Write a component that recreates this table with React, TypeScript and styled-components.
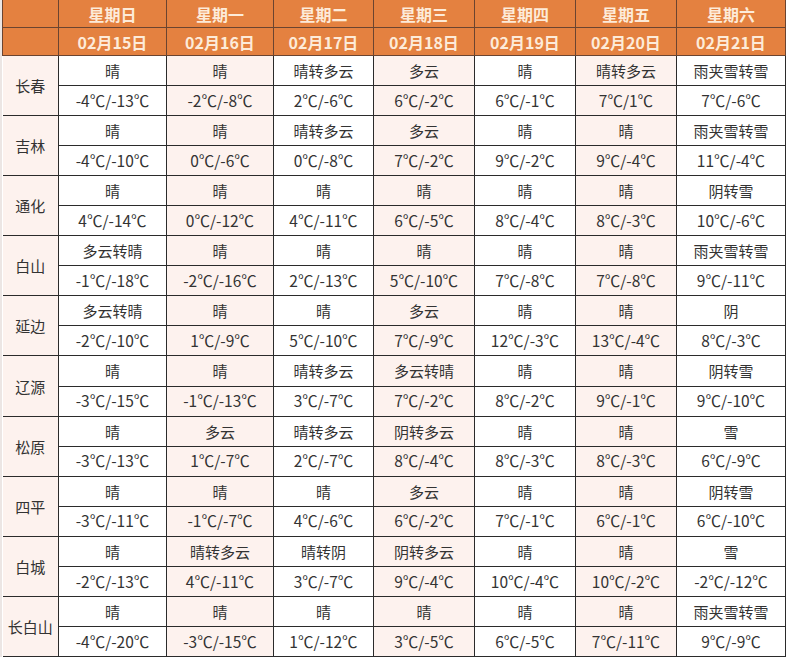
import React from "react";
import styled, { createGlobalStyle } from "styled-components";

const days = ["星期日", "星期一", "星期二", "星期三", "星期四", "星期五", "星期六"];
const dates = ["02月15日", "02月16日", "02月17日", "02月18日", "02月19日", "02月20日", "02月21日"];
const colWidths = [56, 108, 107, 100, 101, 101, 101, 109];

const cities = [
  {
    name: "长春",
    weather: ["晴", "晴", "晴转多云", "多云", "晴", "晴转多云", "雨夹雪转雪"],
    temp: ["-4℃/-13℃", "-2℃/-8℃", "2℃/-6℃", "6℃/-2℃", "6℃/-1℃", "7℃/1℃", "7℃/-6℃"],
  },
  {
    name: "吉林",
    weather: ["晴", "晴", "晴转多云", "多云", "晴", "晴", "雨夹雪转雪"],
    temp: ["-4℃/-10℃", "0℃/-6℃", "0℃/-8℃", "7℃/-2℃", "9℃/-2℃", "9℃/-4℃", "11℃/-4℃"],
  },
  {
    name: "通化",
    weather: ["晴", "晴", "晴", "晴", "晴", "晴", "阴转雪"],
    temp: ["4℃/-14℃", "0℃/-12℃", "4℃/-11℃", "6℃/-5℃", "8℃/-4℃", "8℃/-3℃", "10℃/-6℃"],
  },
  {
    name: "白山",
    weather: ["多云转晴", "晴", "晴", "晴", "晴", "晴", "雨夹雪转雪"],
    temp: ["-1℃/-18℃", "-2℃/-16℃", "2℃/-13℃", "5℃/-10℃", "7℃/-8℃", "7℃/-8℃", "9℃/-11℃"],
  },
  {
    name: "延边",
    weather: ["多云转晴", "晴", "晴", "多云", "晴", "晴", "阴"],
    temp: ["-2℃/-10℃", "1℃/-9℃", "5℃/-10℃", "7℃/-9℃", "12℃/-3℃", "13℃/-4℃", "8℃/-3℃"],
  },
  {
    name: "辽源",
    weather: ["晴", "晴", "晴转多云", "多云转晴", "晴", "晴", "阴转雪"],
    temp: ["-3℃/-15℃", "-1℃/-13℃", "3℃/-7℃", "7℃/-2℃", "8℃/-2℃", "9℃/-1℃", "9℃/-10℃"],
  },
  {
    name: "松原",
    weather: ["晴", "多云", "晴转多云", "阴转多云", "晴", "晴", "雪"],
    temp: ["-3℃/-13℃", "1℃/-7℃", "2℃/-7℃", "8℃/-4℃", "8℃/-3℃", "8℃/-3℃", "6℃/-9℃"],
  },
  {
    name: "四平",
    weather: ["晴", "晴", "晴", "多云", "晴", "晴", "阴转雪"],
    temp: ["-3℃/-11℃", "-1℃/-7℃", "4℃/-6℃", "6℃/-2℃", "7℃/-1℃", "6℃/-1℃", "6℃/-10℃"],
  },
  {
    name: "白城",
    weather: ["晴", "晴转多云", "晴转阴", "阴转多云", "晴", "晴", "雪"],
    temp: ["-2℃/-13℃", "4℃/-11℃", "3℃/-7℃", "9℃/-4℃", "10℃/-4℃", "10℃/-2℃", "-2℃/-12℃"],
  },
  {
    name: "长白山",
    weather: ["晴", "晴", "晴", "晴", "晴", "晴", "雨夹雪转雪"],
    temp: ["-4℃/-20℃", "-3℃/-15℃", "1℃/-12℃", "3℃/-5℃", "6℃/-5℃", "7℃/-11℃", "9℃/-9℃"],
  },
];

const GlobalStyle = createGlobalStyle`
  html, body {
    margin: 0;
    padding: 0;
    background: #ffffff;
  }
  body {
    font-family: "Noto Sans CJK SC", "Noto Sans", sans-serif;
    color: #333333;
  }
`;

const Page = styled.div`
  display: flex;
  width: 786px;
  height: 660px;
  background: #ffffff;
`;

const EdgeStrip = styled.div`
  width: 2px;
  height: 657px;
  background: #ece6e4;
`;

const Table = styled.table`
  border-collapse: collapse;
  table-layout: fixed;
  width: 783px;
  height: 657px;
`;

const HeadCell = styled.th`
  height: 27px;
  padding: 0;
  background: #e48140;
  color: #fdebd9;
  font-size: 16px;
  font-weight: 700;
  text-align: center;
  border: 1px solid #6b4430;
  border-top: none;
  line-height: 1;
`;

const CityCell = styled.td`
  padding: 0;
  background: #fdf2ee;
  font-size: 15px;
  text-align: center;
  border: 1px solid #2b2b2b;
  border-left: none;
  color: #333333;
`;

const DataCell = styled.td<{ $tint: boolean }>`
  height: 29px;
  padding: 0;
  background: ${(p) => (p.$tint ? "#fdf2ee" : "#ffffff")};
  font-size: 15px;
  text-align: center;
  border: 1px solid #2b2b2b;
  color: #333333;
  white-space: nowrap;
  line-height: 1;
`;

const TempText = styled.span`
  font-size: 15.5px;
  font-weight: 400;
`;

export default function App() {
  return (
    <Page>
      <GlobalStyle />
      <EdgeStrip />
      <Table>
        <colgroup>
          {colWidths.map((w, i) => (
            <col key={i} style={{ width: w }} />
          ))}
        </colgroup>
        <thead>
          <tr>
            <HeadCell />
            {days.map((d) => (
              <HeadCell key={d}>{d}</HeadCell>
            ))}
          </tr>
          <tr>
            <HeadCell />
            {dates.map((d) => (
              <HeadCell key={d}>{d}</HeadCell>
            ))}
          </tr>
        </thead>
        <tbody>
          {cities.map((city) => (
            <React.Fragment key={city.name}>
              <tr>
                <CityCell rowSpan={2}>{city.name}</CityCell>
                {city.weather.map((w, i) => (
                  <DataCell key={i} $tint={i % 2 === 1}>
                    {w}
                  </DataCell>
                ))}
              </tr>
              <tr>
                {city.temp.map((t, i) => (
                  <DataCell key={i} $tint={i % 2 === 1}>
                    <TempText>{t}</TempText>
                  </DataCell>
                ))}
              </tr>
            </React.Fragment>
          ))}
        </tbody>
      </Table>
    </Page>
  );
}
